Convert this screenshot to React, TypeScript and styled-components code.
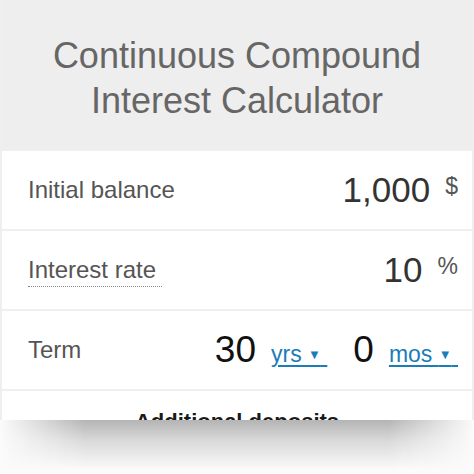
import React from 'react';
import styled, { createGlobalStyle } from 'styled-components';

const GlobalStyle = createGlobalStyle`
  html, body {
    margin: 0;
    padding: 0;
    background: #fbfbfb;
  }
  body {
    font-family: 'Liberation Sans', Arial, Helvetica, sans-serif;
  }
`;

export default function App() {
  return (
    <>
      <GlobalStyle />
      <Page>
        <Card>
          <Header>
            <Title>
              Continuous Compound
              <br />
              Interest Calculator
            </Title>
          </Header>

          <Row>
            <Label>Initial balance</Label>
            <Value>
              <Amount>1,000</Amount>
              <Unit>$</Unit>
            </Value>
          </Row>

          <Row>
            <Label dotted>Interest rate</Label>
            <Value>
              <Amount>10</Amount>
              <Unit>%</Unit>
            </Value>
          </Row>

          <Row>
            <Label>Term</Label>
            <TermValue>
              <TermNumber>30</TermNumber>
              <UnitLink>
                yrs <Caret>▼</Caret>&nbsp;
              </UnitLink>
              <TermNumber>0</TermNumber>
              <UnitLink>
                mos <Caret>▼</Caret>&nbsp;
              </UnitLink>
            </TermValue>
          </Row>

          <SectionRow>
            <SectionTitle>Additional deposits</SectionTitle>
          </SectionRow>
        </Card>
        <Shadow />
      </Page>
    </>
  );
}

const Page = styled.div`
  width: 474px;
  height: 474px;
  overflow: hidden;
`;

const Card = styled.div`
  height: 420px;
  overflow: hidden;
  background: #efefef;
  padding: 0 2px;
  display: flex;
  flex-direction: column;
  gap: 2px;
`;

const Header = styled.div`
  flex: 0 0 auto;
  height: 149px;
  box-sizing: border-box;
  padding-top: 33px;
  background: #eeeeee;
  border-radius: 6px 6px 0 0;
`;

const Title = styled.h1`
  margin: 0;
  font-weight: normal;
  font-size: 36px;
  line-height: 45px;
  color: #666;
  text-align: center;
`;

const Row = styled.div`
  flex: 0 0 auto;
  height: 78px;
  box-sizing: border-box;
  background: #fff;
  display: flex;
  align-items: center;
  justify-content: space-between;
  padding: 0 14px 0 26px;
`;

const Label = styled.span<{ dotted?: boolean }>`
  font-size: 24px;
  color: #555;
  padding-bottom: ${({ dotted }) => (dotted ? '2px' : '0')};
  padding-right: ${({ dotted }) => (dotted ? '6px' : '0')};
  margin-top: ${({ dotted }) => (dotted ? '3px' : '0')};
  border-bottom: ${({ dotted }) => (dotted ? '1px dotted #888' : 'none')};
`;

const Value = styled.div`
  display: flex;
  align-items: flex-start;
  gap: 15px;
`;

const Amount = styled.span`
  font-size: 35px;
  color: #333;
  line-height: 40px;
`;

const Unit = styled.span`
  font-size: 23px;
  color: #555;
  line-height: 24px;
  margin-top: 4px;
`;

const TermValue = styled.div`
  display: flex;
  align-items: baseline;
`;

const TermNumber = styled.span`
  font-size: 37px;
  color: #111;
  margin-right: 15px;
`;

const UnitLink = styled.span`
  font-size: 23px;
  color: #1a7db8;
  text-decoration: underline;
  text-underline-offset: 3px;
  margin-right: 26px;

  &:last-child {
    margin-right: 0;
  }
`;

const Caret = styled.span`
  font-size: 13px;
  position: relative;
  top: -3px;
`;

const SectionRow = styled.div`
  flex: 1 0 auto;
  background: #fff;
  padding-top: 18px;
  text-align: center;
`;

const SectionTitle = styled.div`
  font-size: 22px;
  font-weight: bold;
  color: #1a1a1a;
`;

const Shadow = styled.div`
  height: 50px;
  background: linear-gradient(to bottom, #b4b4b4 0%, #d8d8d8 40%, #fbfbfb 100%);
  -webkit-mask-image: linear-gradient(to right, transparent 0%, #000 18%, #000 82%, transparent 100%);
  mask-image: linear-gradient(to right, transparent 0%, #000 18%, #000 82%, transparent 100%);
`;
